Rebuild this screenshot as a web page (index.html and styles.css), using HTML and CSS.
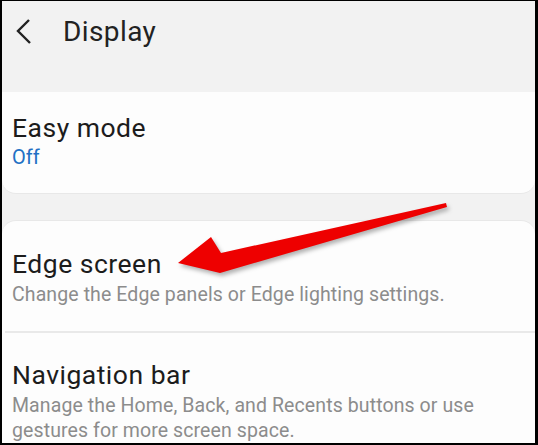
FILE: index.html
```html
<!DOCTYPE html>
<html lang="en">
<head>
    <meta charset="UTF-8">
    <meta name="viewport" content="width=device-width, initial-scale=1.0">
    <title>Display</title>
    <link rel="stylesheet" href="styles.css">
</head>
<body>
    <div class="screen">
        <div class="header">
            <svg class="back" width="20" height="30" viewBox="0 0 20 30">
                <polyline points="14,3 3,14 15,26" fill="none" stroke="#222" stroke-width="2.4"/>
            </svg>
            <h1 class="title">Display</h1>
        </div>

        <div class="card card-top">
            <div class="item">
                <div class="item-title">Easy mode</div>
                <div class="item-value">Off</div>
            </div>
        </div>

        <div class="card card-bottom">
            <div class="item">
                <div class="item-title">Edge screen</div>
                <div class="item-desc">Change the Edge panels or Edge lighting settings.</div>
            </div>
            <div class="divider"></div>
            <div class="item">
                <div class="item-title">Navigation bar</div>
                <div class="item-desc">Manage the Home, Back, and Recents buttons or use gestures for more screen space.</div>
            </div>
        </div>

        <!-- arrow drawn over the list -->
        <svg class="arrow" width="538" height="445" viewBox="0 0 538 445">
            <polygon points="178,263 211,237 221,253 446,203 447,207 220,273" fill="#ee0000"/>
        </svg>
    </div>
</body>
</html>
```

FILE: styles.css
```css
* {
    margin: 0;
    padding: 0;
    box-sizing: border-box;
}
body {
    width: 538px;
    height: 445px;
    overflow: hidden;
    font-family: Roboto, "Liberation Sans", sans-serif;
}
.screen {
    position: relative;
    width: 538px;
    height: 445px;
    border: 2px solid #000;
    border-right-width: 3px;
    border-top-width: 1px;
    background-color: #f2f2f2;
    overflow: hidden;
}
.header {
    display: flex;
    align-items: flex-start;
    height: 91px;
    padding: 16px 0 0 13px;
}
.back {
    display: block;
}
.title {
    margin-left: 28px;
    font-size: 28px;
    font-weight: 400;
    line-height: 30px;
    color: #222;
    letter-spacing: 0.4px;
}
.card {
    background-color: #fdfdfd;
}
.card-top {
    height: 102px;
    border-radius: 0 0 14px 14px;
    border-bottom: 1px solid #e8e8e8;
    padding: 20px 0 0 10px;
}
.card-bottom {
    margin-top: 26px;
    border-radius: 14px 14px 0 0;
    border-top: 1px solid #e8e8e8;
    height: 240px;
}
.card-bottom .item {
    padding: 0 0 0 10px;
}
.card-bottom .item:first-child {
    padding-top: 27px;
    height: 110px;
}
.card-bottom .item:last-child {
    padding-top: 26px;
}
.item-title {
    font-size: 26.5px;
    line-height: 32px;
    color: #1c1c1c;
    letter-spacing: 0.5px;
}
.item-value {
    font-size: 20px;
    line-height: 26px;
    color: #2170c4;
}
.item-desc {
    margin-top: 2px;
    font-size: 19.5px;
    line-height: 25px;
    color: #8c8c8c;
    letter-spacing: 0.1px;
    padding-right: 40px;
}
.divider {
    height: 2px;
    margin-left: 3px;
    background-color: #e9e9e9;
}
.arrow {
    position: absolute;
    left: -2px;
    top: -1px;
    filter: drop-shadow(2px 3px 2px rgba(0, 0, 0, 0.3));
}
```
